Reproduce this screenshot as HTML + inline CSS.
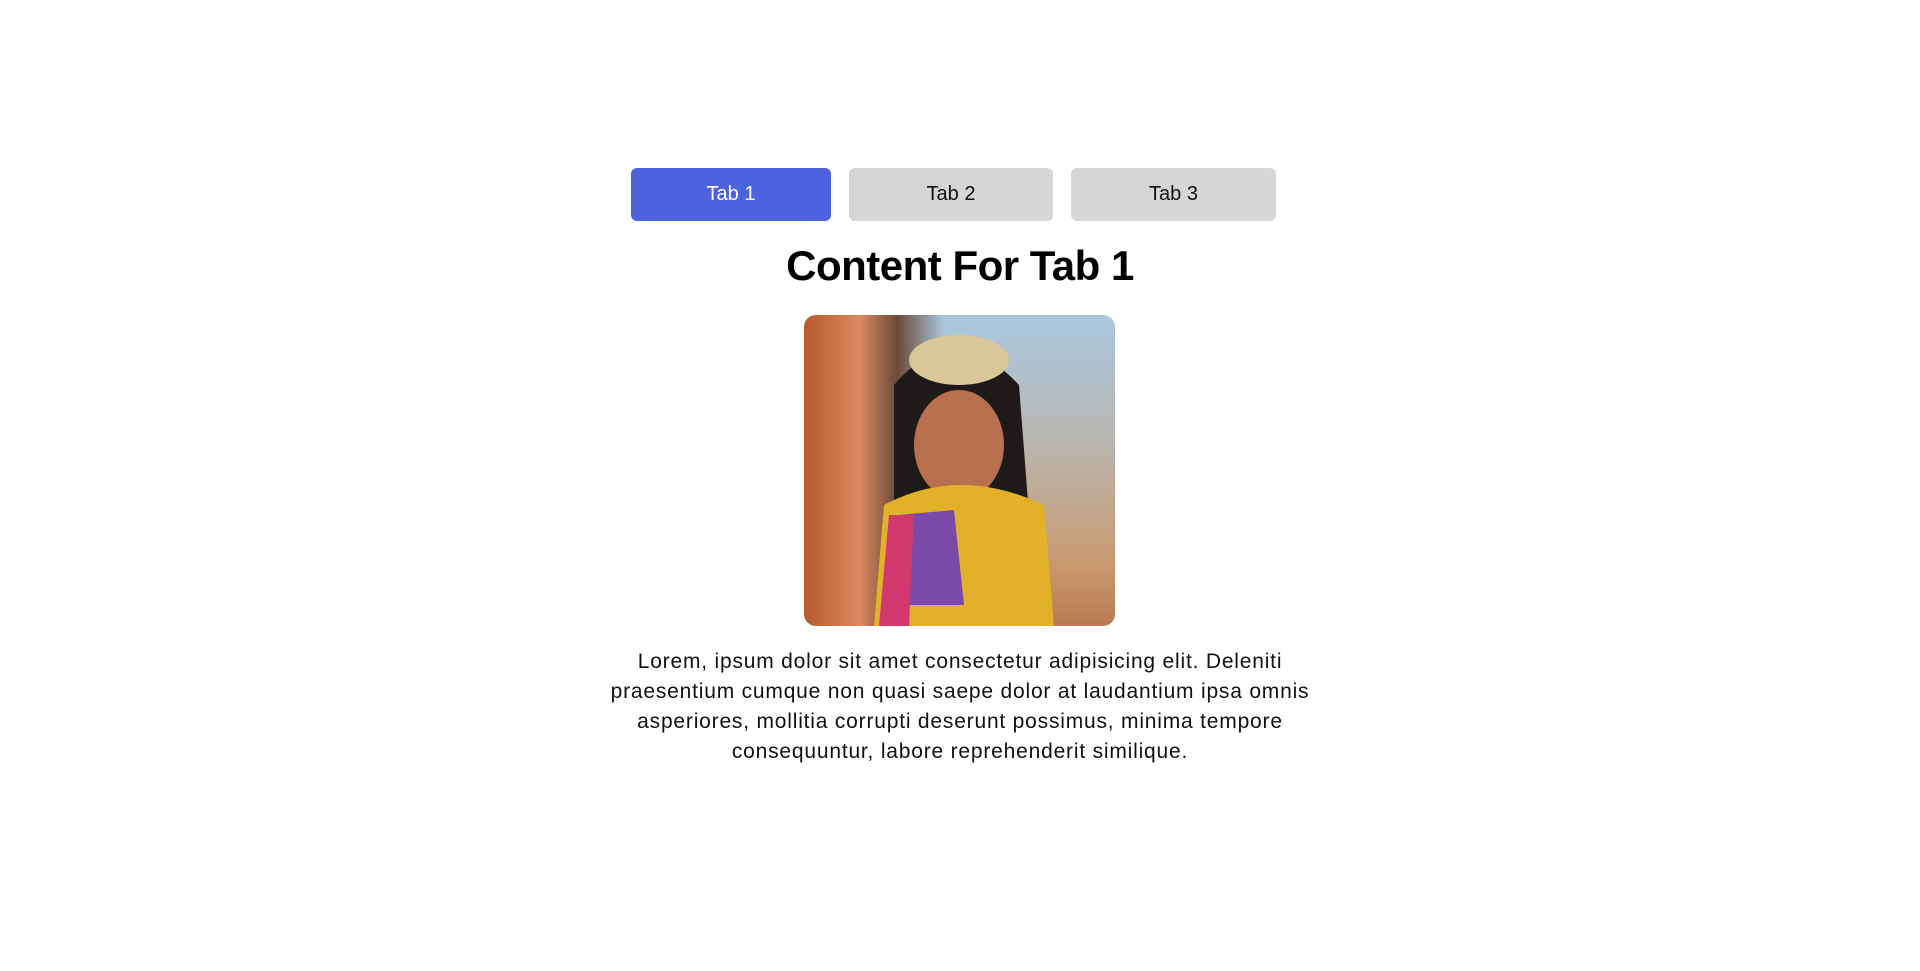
<!DOCTYPE html>
<html><head><meta charset="utf-8"><style>
html,body{margin:0;background:#fff;width:1920px;height:971px;overflow:hidden;font-family:"Liberation Sans",sans-serif}
.tab{position:absolute;top:168px;height:53px;border-radius:6px;background:#d6d6d6;color:#111;font-size:20px;line-height:53px;text-align:center}
.t1{left:631px;width:200px;background:#4c63dd;color:#fff}
.t2{left:849px;width:204px}
.t3{left:1071px;width:205px}
h1{position:absolute;top:242px;left:0;width:1920px;margin:0;text-align:center;font-size:42px;font-weight:900;color:#000;letter-spacing:-0.5px}
.img{position:absolute;left:804px;top:315px;width:311px;height:311px;border-radius:12px;overflow:hidden;
background:linear-gradient(90deg,#b85a2e 0%,#d98a5e 18%,#6a4a3a 30%,transparent 45%),linear-gradient(180deg,#a9c8e0 0%,#b8b6b0 40%,#c99a70 80%,#b87a50 100%)}
p{position:absolute;top:647px;left:460px;width:1000px;margin:0;text-align:center;font-size:21px;line-height:30px;color:#111;white-space:nowrap;letter-spacing:0.8px}
</style></head><body>
<div class="tab t1">Tab 1</div><div class="tab t2">Tab 2</div><div class="tab t3">Tab 3</div>
<h1>Content For Tab 1</h1>
<div class="img"><svg width="311" height="311" viewBox="0 0 311 311">
<path d="M90 70 Q150 0 215 70 L225 200 L90 200Z" fill="#1e1a1a"/>
<ellipse cx="155" cy="45" rx="50" ry="25" fill="#d9c79a"/>
<ellipse cx="155" cy="130" rx="45" ry="55" fill="#b8704e"/>
<path d="M70 311 L80 190 Q155 150 240 190 L250 311Z" fill="#e3b02a"/>
<path d="M95 200 L150 195 L160 290 L95 290Z" fill="#7a4aa8"/>
<path d="M85 200 L110 200 L105 311 L75 311Z" fill="#d0386e"/>
</svg></div>
<p>Lorem, ipsum dolor sit amet consectetur adipisicing elit. Deleniti<br>praesentium cumque non quasi saepe dolor at laudantium ipsa omnis<br>asperiores, mollitia corrupti deserunt possimus, minima tempore<br>consequuntur, labore reprehenderit similique.</p>
</body></html>
